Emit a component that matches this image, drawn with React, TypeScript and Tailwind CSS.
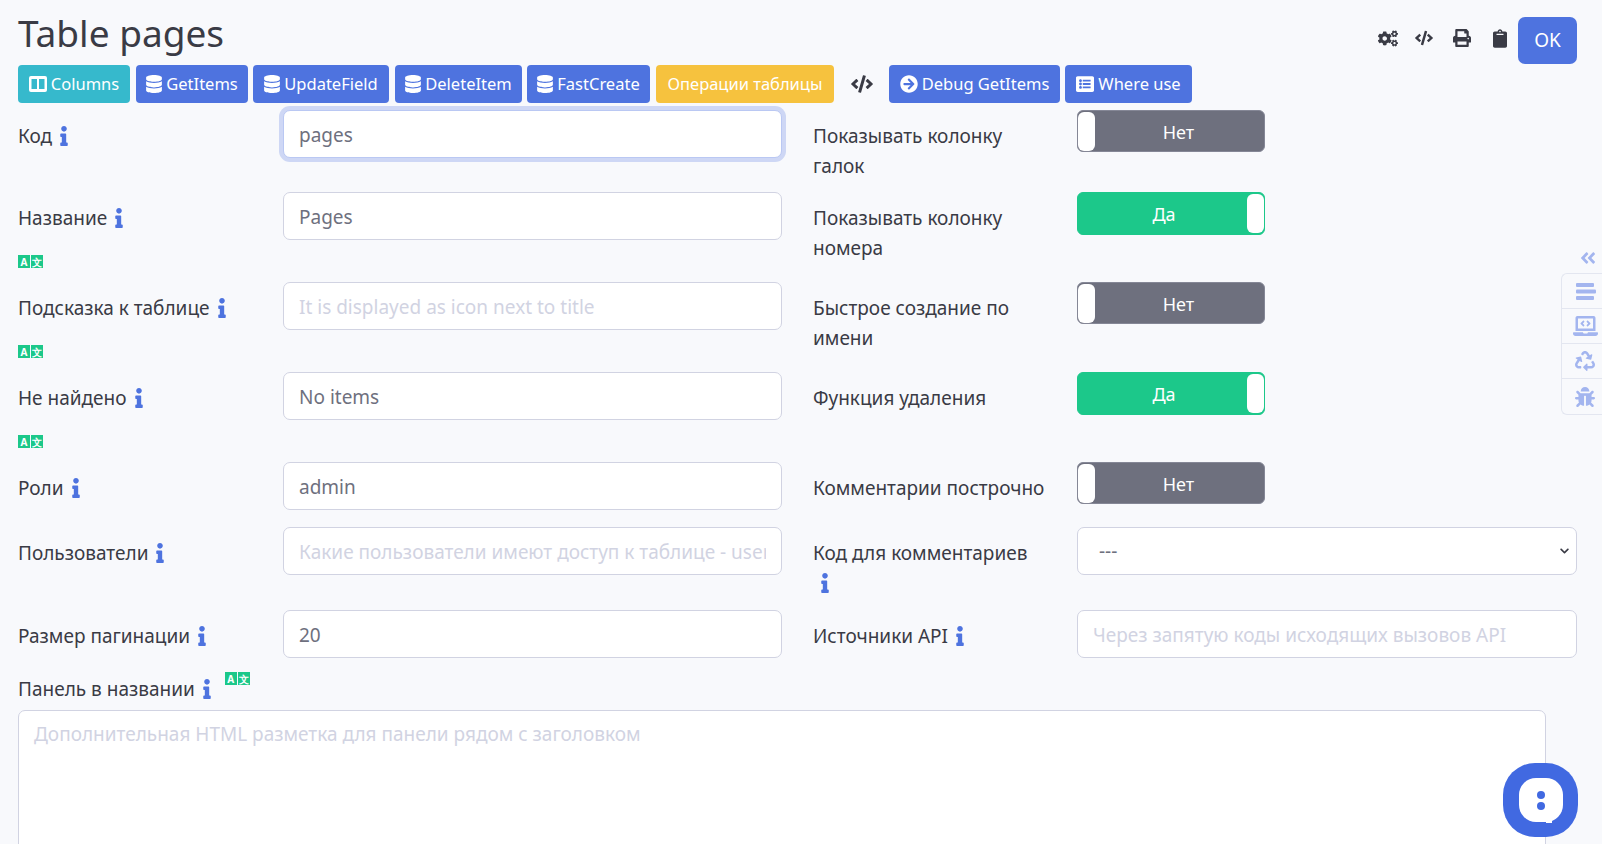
import type { ReactNode } from "react";
import {
  FaAngleDoubleLeft,
  FaArrowCircleRight,
  FaBug,
  FaChevronDown,
  FaClipboard,
  FaCode,
  FaCogs,
  FaDatabase,
  FaInfo,
  FaLaptopCode,
  FaListAlt,
  FaPrint,
  FaRecycle,
} from "react-icons/fa";

const InfoIcon = () => <FaInfo className="ml-2 inline-block h-[20px] w-[8px] text-[#4e73df] align-[-3px]" />;

const Lang = () => (
  <span className="flex h-[13px] w-[26px] gap-px">
    <span className="flex h-[13px] w-3 items-center justify-center bg-[#1cc88a] text-[10px] leading-none font-bold text-white">A</span>
    <span className="flex h-[13px] w-3 items-center justify-center bg-[#1cc88a] text-[10px] leading-none font-bold text-white">文</span>
  </span>
);

const Label = ({ text, lang, info = true, wrapInfo }: { text: string; lang?: boolean; info?: boolean; wrapInfo?: boolean }) => (
  <div className="w-[234px] pt-[11px] leading-[30px]">
    {text}
    {wrapInfo && <br />}
    {info && <InfoIcon />}
    {lang && (
      <div className="mt-[22px]">
        <Lang />
      </div>
    )}
  </div>
);

const Field = ({ value, placeholder, focus, width = "w-[499px]" }: { value?: string; placeholder?: string; focus?: boolean; width?: string }) => (
  <input
    readOnly
    value={value ?? ""}
    placeholder={placeholder}
    className={`h-[48px] rounded-[7px] border bg-white px-[15px] pt-[1px] text-[#6e707e] outline-none placeholder:text-[#d1d3e2] ${width} ${
      focus ? "border-[#bac8f3] ring-[4px] ring-[#4e73df]/25" : "border-[#d1d3e2]"
    }`}
  />
);

const Toggle = ({ on }: { on?: boolean }) =>
  on ? (
    <div className="flex h-[43px] w-[188px] items-center rounded-[6px] border border-[#1cc88a] bg-[#1cc88a] text-[18px] text-white">
      <span className="flex-1 pt-[2px] pl-[3px] text-center">Да</span>
      <span className="h-[39px] w-[17px] rounded-[6px] bg-white" />
    </div>
  ) : (
    <div className="flex h-[42px] w-[188px] items-center rounded-[6px] border border-[#858796] bg-[#6e707e] text-[18px] text-white">
      <span className="h-[39px] w-[17px] rounded-[6px] bg-white" />
      <span className="flex-1 pt-[2px] pr-[2px] text-center">Нет</span>
    </div>
  );

const Btn = ({ color, width, icon, children }: { color: string; width: string; icon?: ReactNode; children: ReactNode }) => (
  <div className={`flex h-[38px] items-center justify-center gap-[4px] rounded-[4px] text-[16.5px] text-white ${color} ${width}`}>
    {icon}
    <span>{children}</span>
  </div>
);

const Row = ({ height, children }: { height: string; children: ReactNode }) => (
  <div className={`grid grid-cols-[265px_530px_264px_500px] ${height}`}>{children}</div>
);

const ColumnsIcon = () => (
  <svg viewBox="0 0 18 16" className="h-[16px] w-[18px]" fill="currentColor">
    <path
      fillRule="evenodd"
      d="M2 0h14a2 2 0 0 1 2 2v12a2 2 0 0 1-2 2H2a2 2 0 0 1-2-2V2a2 2 0 0 1 2-2zM2.5 3v10h5.5V3zM10 3v10h5.5V3z"
    />
  </svg>
);

export default function App() {
  return (
    <div className="relative h-[844px] w-[1602px] overflow-hidden bg-[#f8f9fc] pl-[18px] font-['Noto_Sans',sans-serif] text-[19px] text-[#3a3b45]">
      {/* Header */}
      <div className="flex h-[65px] items-start justify-between pr-[25px]">
        <h1 className="pt-[8px] text-[37px] leading-[50px] font-normal">Table pages</h1>
        <div className="flex items-start pt-[17px]">
          <div className="flex h-[42px] items-center pr-[11px]">
            <FaCogs className="h-[17px] w-[20px]" />
            <FaCode className="ml-[17px] h-[16px] w-[18px]" />
            <FaPrint className="ml-[20px] h-[18px] w-[18px]" />
            <FaClipboard className="ml-[22px] h-[19px] w-[14px]" />
          </div>
          <div className="flex h-[47px] w-[59px] items-center justify-center rounded-[7px] bg-[#4e73df] text-white">OK</div>
        </div>
      </div>

      {/* Toolbar */}
      <div className="mb-[7px] flex h-[38px] items-center">
        <Btn color="bg-[#36b9cc]" width="w-[112px]" icon={<ColumnsIcon />}>Columns</Btn>
        <div className="w-[6px]" />
        <Btn color="bg-[#4e73df]" width="w-[112px]" icon={<FaDatabase className="h-[18px] w-[16px]" />}>GetItems</Btn>
        <div className="w-[5px]" />
        <Btn color="bg-[#4e73df]" width="w-[136px]" icon={<FaDatabase className="h-[18px] w-[16px]" />}>UpdateField</Btn>
        <div className="w-[6px]" />
        <Btn color="bg-[#4e73df]" width="w-[127px]" icon={<FaDatabase className="h-[18px] w-[16px]" />}>DeleteItem</Btn>
        <div className="w-[5px]" />
        <Btn color="bg-[#4e73df]" width="w-[123px]" icon={<FaDatabase className="h-[18px] w-[16px]" />}>FastCreate</Btn>
        <div className="w-[6px]" />
        <Btn color="bg-[#f6c23e]" width="w-[178px]">Операции таблицы</Btn>
        <div className="flex w-[55px] justify-center">
          <FaCode className="h-[18px] w-[22px]" />
        </div>
        <Btn color="bg-[#4e73df]" width="w-[171px]" icon={<FaArrowCircleRight className="h-[18px] w-[18px]" />}>Debug GetItems</Btn>
        <div className="w-[5px]" />
        <Btn color="bg-[#4e73df]" width="w-[127px]" icon={<FaListAlt className="h-[18px] w-[18px]" />}>Where use</Btn>
      </div>

      {/* Form */}
      <Row height="h-[82px]">
        <Label text="Код" />
        <Field value="pages" focus />
        <Label text="Показывать колонку галок" info={false} />
        <Toggle />
      </Row>
      <Row height="h-[90px]">
        <Label text="Название" lang />
        <Field value="Pages" />
        <Label text="Показывать колонку номера" info={false} />
        <Toggle on />
      </Row>
      <Row height="h-[90px]">
        <Label text="Подсказка к таблице" lang />
        <Field placeholder="It is displayed as icon next to title" />
        <Label text="Быстрое создание по имени" info={false} />
        <Toggle />
      </Row>
      <Row height="h-[90px]">
        <Label text="Не найдено" lang />
        <Field value="No items" />
        <Label text="Функция удаления" info={false} />
        <Toggle on />
      </Row>
      <Row height="h-[65px]">
        <Label text="Роли" />
        <Field value="admin" />
        <Label text="Комментарии построчно" info={false} />
        <Toggle />
      </Row>
      <Row height="h-[83px]">
        <Label text="Пользователи" />
        <Field placeholder="Какие пользователи имеют доступ к таблице - user1,user2" />
        <Label text="Код для комментариев" wrapInfo />
        <div className="relative h-[48px] w-[500px]">
          <select className="h-[48px] w-full appearance-none rounded-[7px] border border-[#d1d3e2] bg-white pt-[1px] pr-[15px] pl-[21px] text-[#6e707e] outline-none">
            <option>---</option>
          </select>
          <FaChevronDown className="absolute top-[19px] right-[6px] h-[10px] w-[13px] text-[#3a3b45]" />
        </div>
      </Row>
      <Row height="h-[53px]">
        <Label text="Размер пагинации" />
        <Field value="20" />
        <Label text="Источники API" />
        <Field placeholder="Через запятую коды исходящих вызовов API" width="w-[500px]" />
      </Row>

      <div className="flex h-[47px] items-start">
        <div className="pt-[11px] leading-[30px]">
          Панель в названии
          <InfoIcon />
        </div>
        <div className="ml-[14px] pt-[9px]">
          <Lang />
        </div>
      </div>
      <textarea
        readOnly
        placeholder="Дополнительная HTML разметка для панели рядом с заголовком"
        className="block h-[200px] w-[1528px] rounded-[7px] border border-[#d1d3e2] bg-white px-[15px] py-[9px] outline-none placeholder:text-[#d1d3e2]"
      />

      {/* Side panel */}
      <div className="absolute top-[249px] right-0 flex w-[41px] flex-col">
        <FaAngleDoubleLeft className="mb-[6px] ml-[18px] h-[18px] w-[18px] text-[#a3b5ef]" />
        <div className="flex flex-col divide-y divide-[#e3e6f0] rounded-l-[6px] border border-r-0 border-[#e3e6f0] bg-[#f8f9fc] text-[#a3b5ef]">
          <div className="flex h-[35px] items-center justify-center pl-[8px]">
            <svg viewBox="0 0 20 17" className="h-[17px] w-[20px]" fill="currentColor">
              <rect x="0" y="0" width="18" height="4" rx="1" />
              <rect x="0" y="6.5" width="20" height="4" rx="1" />
              <rect x="0" y="13" width="18" height="4" rx="1" />
            </svg>
          </div>
          <div className="flex h-[35px] items-center justify-center pl-[6px]">
            <FaLaptopCode className="h-[20px] w-[25px]" />
          </div>
          <div className="flex h-[35px] items-center justify-center pl-[6px]">
            <FaRecycle className="h-[20px] w-[20px]" />
          </div>
          <div className="flex h-[35px] items-center justify-center pl-[6px]">
            <FaBug className="h-[20px] w-[20px]" />
          </div>
        </div>
      </div>

      {/* Chat widget */}
      <div className="absolute top-[763px] left-[1503px] flex h-[74px] w-[75px] items-center justify-center rounded-[32px] bg-[#4169e1]">
        <div className="relative flex h-[44px] w-[44px] flex-col items-center justify-center gap-[3px] rounded-[17px] bg-white">
          <span className="h-2 w-2 rounded-full bg-[#4169e1]" />
          <span className="h-2 w-2 rounded-full bg-[#4169e1]" />
          <span className="absolute right-[11px] -bottom-[1px] h-[5px] w-[6px] bg-white" />
        </div>
      </div>
    </div>
  );
}
